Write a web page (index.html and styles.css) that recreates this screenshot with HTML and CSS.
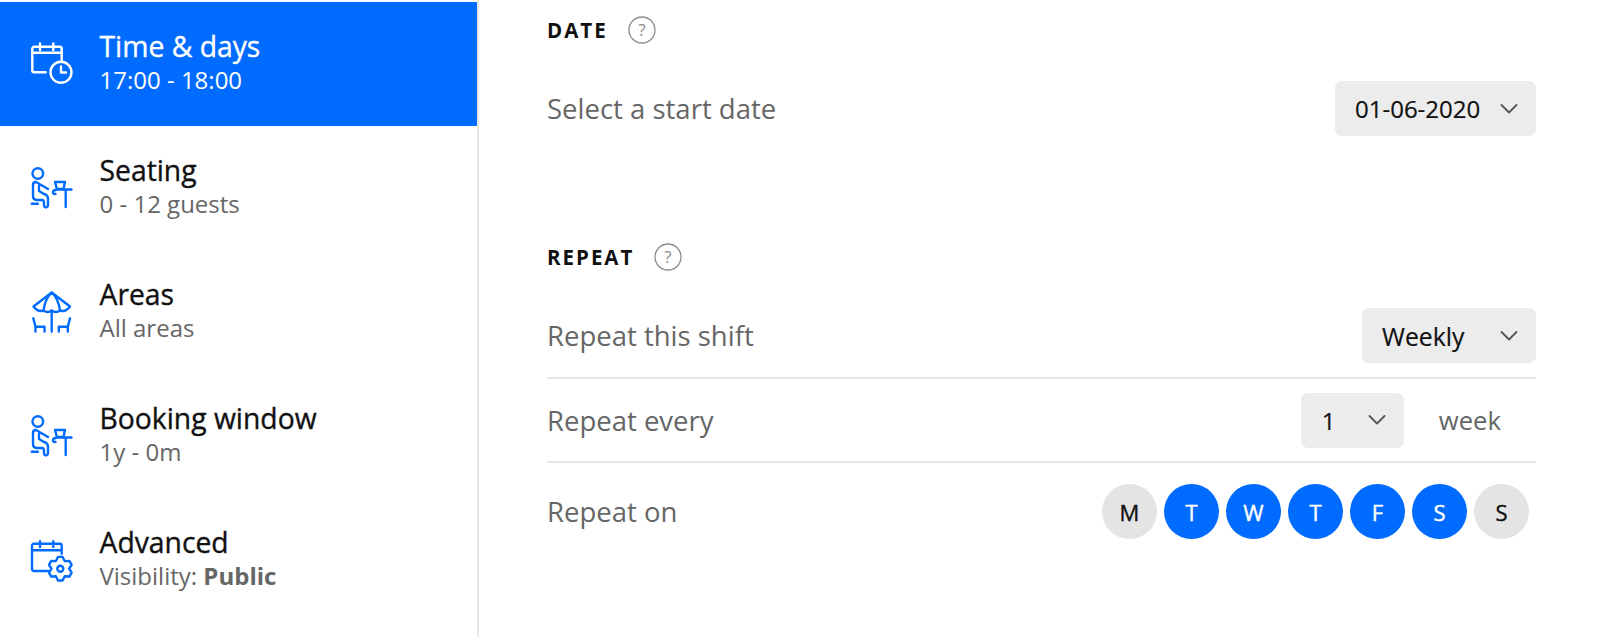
FILE: index.html
```html
<!DOCTYPE html>
<html lang="en">
<head>
<meta charset="utf-8">
<title>Shift settings</title>
<link rel="stylesheet" href="styles.css">
</head>
<body>
<div class="page">
  <nav class="sidebar">
    <div class="item active">
      <svg class="icon" viewBox="0 0 44 44"><path d="M15.700 30.300H4.300a2 2 0 0 1-2-2V6.700a2 2 0 0 1 2-2h25.400a2 2 0 0 1 2 2v13M2.300 10.700h29.400M10 1.500v6.500M23.300 1.500v6.500"/><circle cx="31" cy="30.300" r="10.500"/><path d="M31 24.500v6h5"/></svg>
      <div class="text"><div class="title">Time &amp; days</div><div class="sub">17:00 - 18:00</div></div>
    </div>
    <div class="item">
      <svg class="icon" viewBox="0 0 44 44"><circle cx="7.800" cy="7.500" r="5.300"/><path d="M6 16L18 23M6 16Q3 16 3 19V30Q3 34 7 34H12Q14 34 14 37V40Q15 42 17 41Q18 40.500 18 39V33Q18 29 14 28L9 25V20M1.800 37.800H7.800M25 16H35L33.500 23H27ZM41.500 23.500H27Q23 24 23 26.500Q23 28 25.500 28M35.700 24V41"/></svg>
      <div class="text"><div class="title">Seating</div><div class="sub">0 - 12 guests</div></div>
    </div>
    <div class="item">
      <svg class="icon" viewBox="0 0 44 44"><path d="M21.700 2.500L3.500 16.500Q8 22.500 13.500 20.500Q17.500 23.500 21.700 20.500Q26 23.500 30 20.500Q35.500 22.500 40 16.500ZM21.700 2.500Q15 9 13.500 20.500M21.700 2.500Q28.500 9 30 20.500M21.700 20.500V41.500M3.300 28.300L5.500 36.700V41.500M5.500 36.700H14.500V41.500M40 28.300L37.800 36.700V41.500M37.800 36.700H28.800V41.500"/></svg>
      <div class="text"><div class="title">Areas</div><div class="sub">All areas</div></div>
    </div>
    <div class="item">
      <svg class="icon" viewBox="0 0 44 44"><circle cx="7.800" cy="7.500" r="5.300"/><path d="M6 16L18 23M6 16Q3 16 3 19V30Q3 34 7 34H12Q14 34 14 37V40Q15 42 17 41Q18 40.500 18 39V33Q18 29 14 28L9 25V20M1.800 37.800H7.800M25 16H35L33.500 23H27ZM41.500 23.500H27Q23 24 23 26.500Q23 28 25.500 28M35.700 24V41"/></svg>
      <div class="text"><div class="title">Booking window</div><div class="sub">1y - 0m</div></div>
    </div>
    <div class="item">
      <svg class="icon" viewBox="0 0 44 44"><path d="M18 33H4a2 2 0 0 1-2-2V7.700a2 2 0 0 1 2-2h25.700a2 2 0 0 1 2 2v8M2 12.300h29.700M10 3.300v5.700M23.300 3.300v5.700"/><path d="M28.010 18.920H32.590L34.700 23.080 39.360 22.830 41.650 26.790 39.100 30.700 41.650 34.610 39.360 38.570 34.700 38.320 32.590 42.480H28.010L25.900 38.320 21.240 38.570 18.950 34.610 21.500 30.700 18.950 26.790 21.240 22.830 25.900 23.080Z"/><circle cx="30.300" cy="30.700" r="3"/></svg>
      <div class="text"><div class="title">Advanced</div><div class="sub">Visibility: <b>Public</b></div></div>
    </div>
  </nav>
  <main class="main">
    <section class="date-section">
      <h2 class="heading">DATE <svg class="help" viewBox="0 0 28 28"><circle cx="14" cy="14" r="13"/><text x="14" y="20" text-anchor="middle">?</text></svg></h2>
      <div class="row first">
        <span class="label">Select a start date</span>
        <div class="select date"><span>01-06-2020</span><svg class="chev" viewBox="0 0 18 10"><path d="M1.500 1l7.500 7.500L16.500 1"/></svg></div>
      </div>
    </section>
    <section>
      <h2 class="heading">REPEAT <svg class="help" viewBox="0 0 28 28"><circle cx="14" cy="14" r="13"/><text x="14" y="20" text-anchor="middle">?</text></svg></h2>
      <div class="row first ruled">
        <span class="label">Repeat this shift</span>
        <div class="select weekly"><span>Weekly</span><svg class="chev" viewBox="0 0 18 10"><path d="M1.500 1l7.500 7.500L16.500 1"/></svg></div>
      </div>
      <div class="row ruled">
        <span class="label">Repeat every</span>
        <div class="every">
          <div class="select num"><span>1</span><svg class="chev" viewBox="0 0 18 10"><path d="M1.500 1l7.500 7.500L16.500 1"/></svg></div>
          <span class="unit">week</span>
        </div>
      </div>
      <div class="row days-row">
        <span class="label">Repeat on</span>
        <div class="days">
          <span class="day">M</span><span class="day on">T</span><span class="day on">W</span><span class="day on">T</span><span class="day on">F</span><span class="day on">S</span><span class="day">S</span>
        </div>
      </div>
    </section>
  </main>
</div>
</body>
</html>
```

FILE: styles.css
```css
* { box-sizing: border-box; }
html, body { margin: 0; padding: 0; background: #fff; }
body { font-family: "Open Sans", sans-serif; color: #111; overflow: hidden; }
.page { display: flex; height: 637px; }
.sidebar { width: 479px; flex: none; padding-top: 1.500px; border-right: 2px solid #e6e6e6; }
.item { height: 124px; display: flex; align-items: center; padding-left: 30px; gap: 25.500px; }
.item.active { background: #006bff; color: #fff; }
.icon { width: 44px; height: 44px; flex: none; fill: none; stroke: #006bff; stroke-width: 2.400; stroke-linecap: round; stroke-linejoin: round; }
.active .icon { stroke: #fff; }
.title { font-size: 28.300px; font-weight: 400; line-height: 32px; -webkit-text-stroke: 0.350px currentColor; }
.sub { font-size: 24px; line-height: 35px; color: #666; }
.sub b { font-weight: 700; }
.active .sub { color: #fff; }
.main { flex: 1; padding: 0 64px 0 68px; }
.heading { margin: 0; font-size: 20.500px; font-weight: 700; letter-spacing: 2px; display: flex; align-items: center; gap: 20px; height: 26px; color: #111; line-height: 26px; }
.date-section { padding-top: 17px; height: 244px; }
.help { width: 28px; height: 28px; fill: none; stroke: #8c8c8c; stroke-width: 1.300; }
.help text { fill: #8c8c8c; stroke: none; font-size: 17px; font-weight: 400; letter-spacing: 0; font-family: "Open Sans", sans-serif; }
.row { display: flex; align-items: center; justify-content: space-between; height: 84px; }
.row.first { height: 71px; margin-top: 38px; align-items: flex-start; }
.row.ruled { border-bottom: 2px solid #e6e6e6; }
.label { font-size: 27.500px; color: #666; }
.row.first .label { line-height: 56px; }
.select { height: 55px; background: #ececec; border-radius: 7px; display: flex; align-items: center; justify-content: space-between; font-size: 24px; font-weight: 400; color: #111; -webkit-text-stroke: 0.200px currentColor; }
.select.date { width: 201px; padding: 0 18px 0 20px; }
.select.weekly { width: 174px; padding: 0 18px 0 20px; font-size: 24.800px; }
.select.num { width: 103px; padding: 0 18px 0 21px; }
.chev { width: 18px; height: 10px; fill: none; stroke: #555; stroke-width: 1.800; stroke-linecap: round; stroke-linejoin: round; }
.every { display: flex; align-items: center; gap: 35px; padding-right: 35px; }
.unit { font-size: 25.700px; color: #666; }
.days-row { height: 97px; padding-right: 7px; }
.days { display: flex; gap: 7px; }
.day { width: 55px; height: 55px; border-radius: 50%; background: #e4e4e4; color: #111; display: flex; align-items: center; justify-content: center; font-size: 22px; font-weight: 400; -webkit-text-stroke: 0.400px currentColor; }
.day.on { background: #006bff; color: #fff; }
```
